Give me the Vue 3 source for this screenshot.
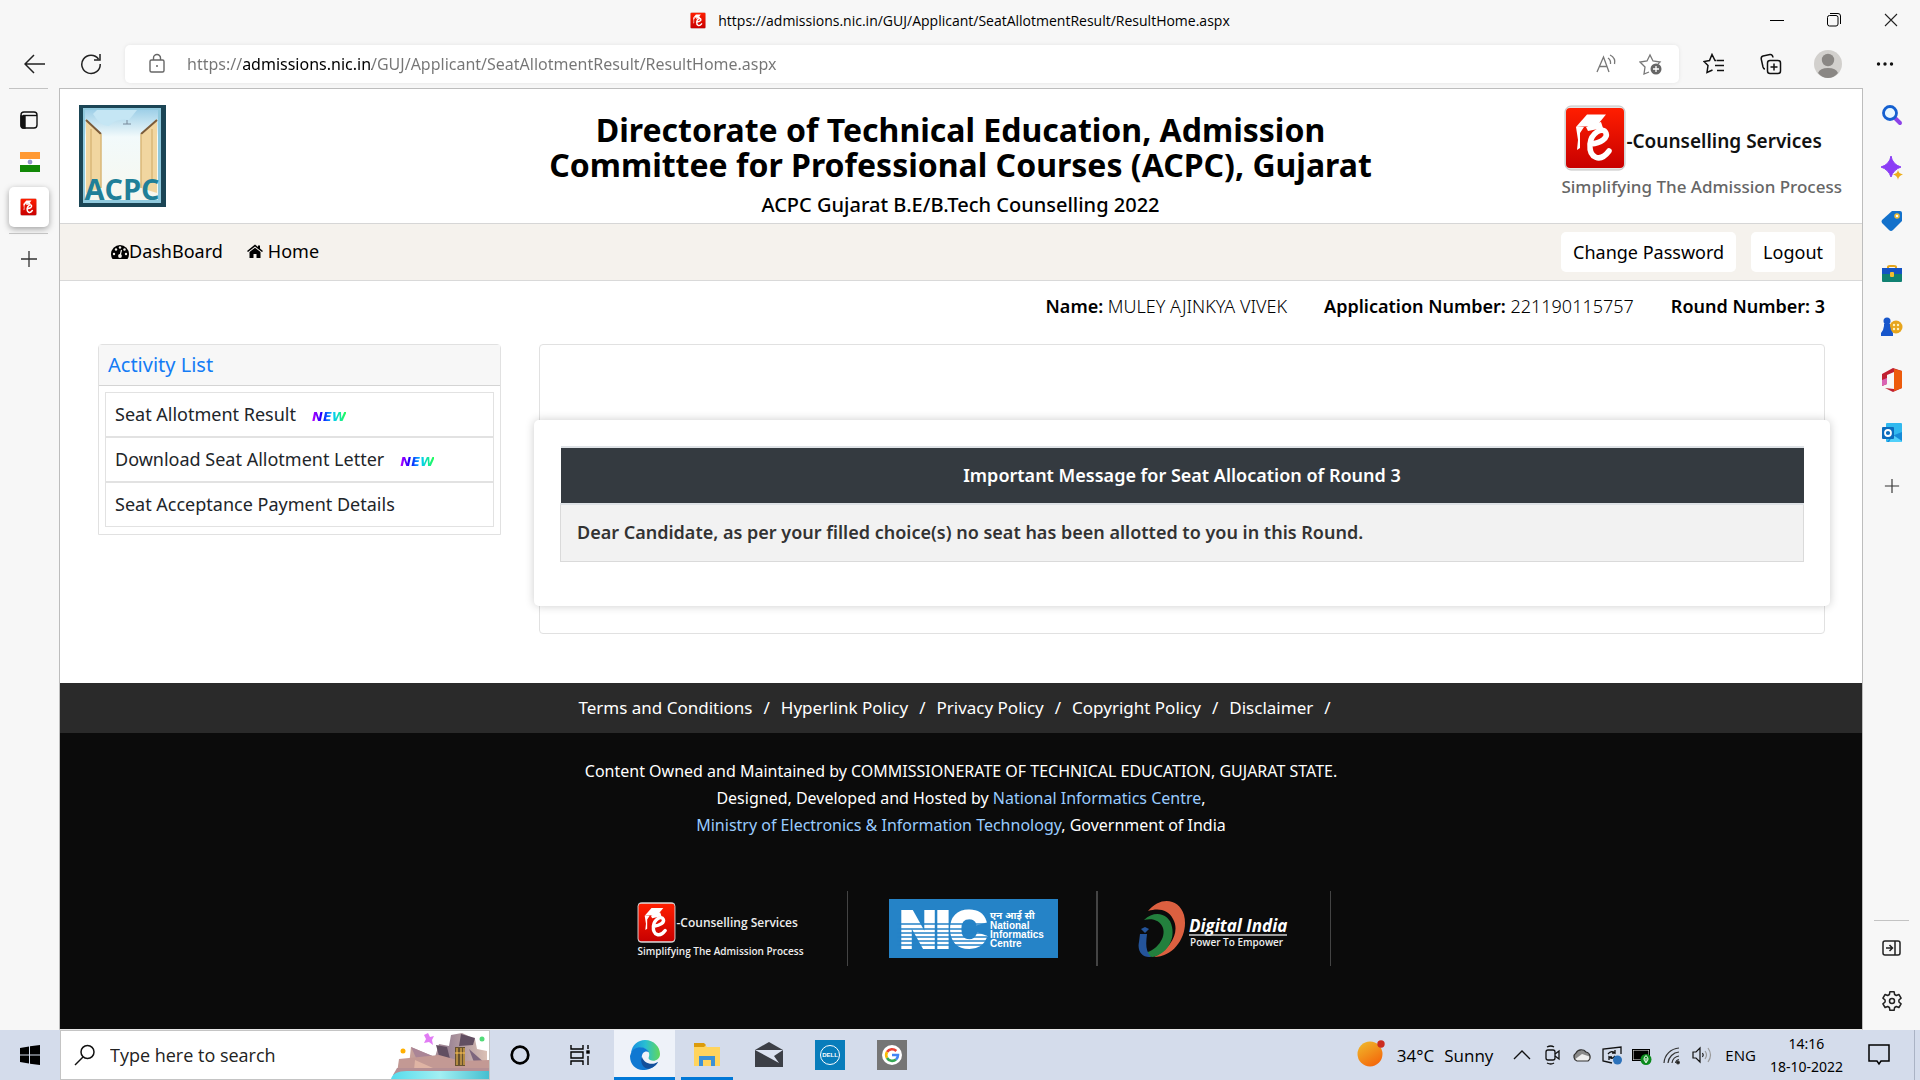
<script setup>
import { ref } from 'vue'

const address = ref('https://admissions.nic.in/GUJ/Applicant/SeatAllotmentResult/ResultHome.aspx')
const query = ref('')

const activities = [
  { label: 'Seat Allotment Result', fresh: true },
  { label: 'Download Seat Allotment Letter', fresh: true },
  { label: 'Seat Acceptance Payment Details', fresh: false }
]

const policies = ['Terms and Conditions', 'Hyperlink Policy', 'Privacy Policy', 'Copyright Policy', 'Disclaimer']
</script>

<template>
  <div class="screen">
    <svg class="defs" width="0" height="0" aria-hidden="true">
      <defs>
        <linearGradient id="red" x1="0" y1="0" x2="0" y2="1"><stop offset="0" stop-color="#ff1e00" /><stop offset="1" stop-color="#c80000" /></linearGradient>
        <symbol id="e-logo" viewBox="0 0 62 66">
          <rect x="1" y="1" width="60" height="64" rx="6" fill="#e6e6e6" stroke="#c4c4c4" />
          <rect x="2" y="3" width="58" height="60" rx="4" fill="url(#red)" />
          <path d="M23 9.500H42L35 18L28 21L12 22Z" fill="#fff" />
          <path d="M12 22L14 35L13 45L16 43V28L20 22Z" fill="#fff" />
          <path d="M22 22Q30 18 37 17L39 23L24 26Z" fill="#fff" />
          <path d="M27 39C37 38 44 33 42 28C39 21 27 28 26 39C25 53 36 58 45 46" fill="none" stroke="#fff" stroke-width="5.500" stroke-linecap="round" />
        </symbol>
        <symbol id="plus" viewBox="0 0 18 18"><path d="M9 1V17M1 9H17" fill="none" stroke="#333" stroke-width="1.300" /></symbol>
      </defs>
    </svg>

    <header class="titlebar">
      <span></span>
      <div class="title">
        <svg width="16" height="17"><use href="#e-logo" /></svg>
        <span>https://admissions.nic.in/GUJ/Applicant/SeatAllotmentResult/ResultHome.aspx</span>
      </div>
      <div class="window-buttons">
        <button aria-label="Minimise"><svg width="14" height="14"><path d="M0 7.500H14" stroke="#000" /></svg></button>
        <button aria-label="Restore"><svg width="14" height="14" fill="none" stroke="#000"><rect x=".5" y="2.500" width="10.500" height="10.500" rx="2" /><path d="M3 .5H11Q13.500 .5 13.500 3V11" /></svg></button>
        <button aria-label="Close"><svg width="14" height="14"><path d="M1 1L13 13M13 1L1 13" stroke="#222" stroke-width="1.100" /></svg></button>
      </div>
    </header>

    <div class="toolbar">
      <button class="tool back" aria-label="Back"><svg width="22" height="20" fill="none" stroke="#222" stroke-width="1.500"><path d="M21 10H2M10 1L1 10L10 19" /></svg></button>
      <button class="tool reload" aria-label="Refresh"><svg width="22" height="22" fill="none" stroke="#222" stroke-width="1.500"><path d="M18.500 6A9.200 9.200 0 1 0 20.200 11M20 1V7H14" /></svg></button>
      <div class="address">
        <svg width="18" height="22" fill="none" stroke="#666" stroke-width="1.400"><rect x="2" y="7" width="14" height="12" rx="1.500" /><path d="M5.500 7V5A3.500 3.500 0 0 1 12.500 5V7" /><circle cx="9" cy="13" r="1" fill="#666" stroke="none" /></svg>
        <input v-model="address" aria-label="Address" />
        <button class="tool" aria-label="Read aloud"><svg width="22" height="20" fill="none" stroke="#777" stroke-width="1.300"><path d="M2 18L8.500 3L14 18M4.500 12.500H12M13 4Q16 6 15.500 10M15 1Q21 4 19.500 10" /></svg></button>
        <button class="tool star" aria-label="Add to favourites"><svg width="24" height="22" fill="none" stroke="#777" stroke-width="1.300"><path d="M10 19L5 21L6 14L1 9L8 8L11 2L14 8L21 9L19 11" /><circle cx="17" cy="16" r="5.500" fill="#666" stroke="none" /><path d="M17 13V19M14 16H20" stroke="#fff" /></svg></button>
      </div>
      <button class="tool" aria-label="Favourites"><svg width="22" height="22" fill="none" stroke="#111" stroke-width="1.500"><path d="M13.500 7.500H12L9 1.500L6.500 7.500L1 8.500L5 12.500L4 19.500L9.500 17M14 7.500H21M12 12.500H21M14 17.500H21" /></svg></button>
      <button class="tool" aria-label="Collections"><svg width="22" height="22" fill="none" stroke="#111" stroke-width="1.500"><rect x="7.500" y="7.500" width="13" height="13" rx="2.500" /><path d="M14 10.500V17.500M10.500 14H17.500M5 16Q3.500 16 3 14L1.200 6Q1 3.500 3 3L10 1.500Q12.500 1.200 13 4.500" /></svg></button>
      <button class="tool" aria-label="Profile"><svg width="28" height="28"><circle cx="14" cy="14" r="14" fill="#d2d0cd" /><circle cx="14" cy="10" r="6.200" fill="#8a8784" /><path d="M4 23Q6 18 14 18Q22 18 24 23Q20 28 14 28Q8 28 4 23" fill="#8a8784" /></svg></button>
      <button class="tool" aria-label="More"><svg width="18" height="6" fill="#111"><circle cx="2.500" cy="3" r="1.700" /><circle cx="9" cy="3" r="1.700" /><circle cx="15.500" cy="3" r="1.700" /></svg></button>
    </div>

    <div class="browser">
      <nav class="tabs" aria-label="Tabs">
        <hr />
        <button class="tab" aria-label="Tab actions"><svg width="18" height="18" fill="none" stroke="#111" stroke-width="1.400"><rect x="1" y="1" width="16" height="16" rx="3" /><path d="M3 4.500H17" /><path d="M1 5H5V17H3Q1 17 1 14Z" fill="#111" /></svg></button>
        <button class="tab second" aria-label="India portal"><svg width="20" height="20"><rect width="20" height="20" fill="#fff" /><rect width="20" height="7" fill="#ff9933" /><rect y="13" width="20" height="7" fill="#128807" /><circle cx="10" cy="10" r="2" fill="#99c" stroke="#66b" stroke-width=".5" /></svg></button>
        <button class="tab active" aria-label="Counselling"><svg width="17" height="18"><use href="#e-logo" /></svg></button>
        <hr class="low" />
        <button class="tab" aria-label="New tab"><svg width="18" height="18"><use href="#plus" /></svg></button>
      </nav>

      <main class="site">
        <header class="masthead">
          <svg class="acpc" width="87" height="102" viewBox="0 0 87 102">
            <defs><linearGradient id="sky" x1="0" y1="0" x2="0" y2="1"><stop offset="0" stop-color="#9fd0e8" /><stop offset=".3" stop-color="#f2fafb" /><stop offset="1" stop-color="#f7f7ee" /></linearGradient></defs>
            <rect width="87" height="102" fill="#1b4555" />
            <rect x="4" y="3" width="78" height="95" fill="#90c9dd" />
            <rect x="6" y="5" width="73" height="90" fill="url(#sky)" />
            <path d="M14 9Q22 22 30 21Q37 13 50 15L58 5H18Z" fill="#c5e6f4" />
            <path d="M7 14L22 29V83L7 88Z" fill="#f1d6a0" />
            <path d="M78 14L62 29V83L78 88Z" fill="#f1d6a0" />
            <path d="M7 15L22 29M78 15L62 29" stroke="#7b5c3a" stroke-width="2" />
            <path d="M22 29V83M62 29V83M12 24V78M73 24V78" stroke="#d9b878" stroke-width="1.500" />
            <path d="M44 19H52M48 15V19" stroke="#789" />
            <text x="43" y="95" text-anchor="middle" font-family="Open Sans, sans-serif" font-weight="700" font-size="29" fill="#207f98">ACPC</text>
          </svg>
          <div class="heading">
            <h1>Directorate of Technical Education, Admission<br />Committee for Professional Courses (ACPC), Gujarat</h1>
            <p>ACPC Gujarat B.E/B.Tech Counselling 2022</p>
          </div>
          <div class="brand">
            <div class="brand-top"><svg width="62" height="66"><use href="#e-logo" /></svg><strong>-Counselling Services</strong></div>
            <span>Simplifying The Admission Process</span>
          </div>
        </header>

        <nav class="menu">
          <a href="#dashboard"><svg width="18" height="15" viewBox="0 0 18 15"><path d="M9 1A9 9 0 0 0 0 10Q0 13 1.500 15H16.500Q18 13 18 10A9 9 0 0 0 9 1" fill="#000" /><g fill="#f5f2ed"><circle cx="3" cy="10" r="1.200" /><circle cx="5" cy="5.500" r="1.200" /><circle cx="9" cy="3.500" r="1.200" /><circle cx="13.500" cy="5.500" r="1.200" /><circle cx="15" cy="10" r="1.200" /><circle cx="9" cy="12" r="1.900" /></g><path d="M9 12L10.500 6" stroke="#f5f2ed" stroke-width="1.200" /></svg>DashBoard</a>
          <a class="home" href="#home"><svg width="16" height="14" viewBox="0 0 16 14"><path d="M0 7L8 .5L11 3V1.500H13V4.500L16 7L15 8L8 2.500L1 8Z" /><path d="M2.500 8L8 3.700L13.500 8V14H9.500V10H6.500V14H2.500Z" /></svg>Home</a>
          <span class="spacer"></span>
          <button>Change Password</button>
          <button>Logout</button>
        </nav>

        <div class="applicant">
          <span><b>Name:</b> MULEY AJINKYA VIVEK</span>
          <span><b>Application Number:</b> 221190115757</span>
          <b>Round Number: 3</b>
        </div>

        <div class="columns">
          <section class="activity">
            <h2>Activity List</h2>
            <ul>
              <li v-for="item in activities" :key="item.label"><a href="#activity">{{ item.label }}</a><em v-if="item.fresh">NEW</em></li>
            </ul>
          </section>
          <section class="result">
            <div class="notice">
              <table>
                <thead><tr><th>Important Message for Seat Allocation of Round 3</th></tr></thead>
                <tbody><tr><td>Dear Candidate, as per your filled choice(s) no seat has been allotted to you in this Round.</td></tr></tbody>
              </table>
            </div>
          </section>
        </div>

        <footer class="foot">
          <div class="policies"><template v-for="p in policies" :key="p"><a href="#policy">{{ p }}</a><i>/</i></template></div>
          <div class="credits">
            <p>Content Owned and Maintained by COMMISSIONERATE OF TECHNICAL EDUCATION, GUJARAT STATE.</p>
            <p>Designed, Developed and Hosted by <a href="#nic">National Informatics Centre</a>,</p>
            <p><a href="#meity">Ministry of Electronics &amp; Information Technology</a>, Government of India</p>
          </div>
          <div class="partners">
            <div class="partner first">
              <div class="mini">
                <div class="brand-top"><svg width="39" height="41"><use href="#e-logo" /></svg><strong>-Counselling Services</strong></div>
                <span>Simplifying The Admission Process</span>
              </div>
            </div>
            <div class="partner second">
              <svg width="169" height="59" viewBox="0 0 169 59">
                <rect width="169" height="59" fill="#2583c7" />
                <text x="11" y="48" font-family="Liberation Sans, sans-serif" font-weight="700" font-size="50" fill="#fff" stroke="#fff" stroke-width="4">NIC</text>
                <path d="M8 25H98M8 30H98M8 34H98M8 38H98M8 42H98M8 46H98" stroke="#2583c7" stroke-width="1.300" />
                <g fill="#fff" font-family="Liberation Sans, Noto Sans Devanagari, sans-serif" font-weight="700" font-size="10">
                  <text x="101" y="20">एन आई सी</text><text x="101" y="30">National</text><text x="101" y="39">Informatics</text><text x="101" y="48">Centre</text>
                </g>
              </svg>
            </div>
            <div class="partner third">
              <svg width="152" height="58" viewBox="0 0 152 58">
                <path d="M10 11C22 -4 41 -2 46 15C51 34 37 57 16 57C34 48 42 31 35 19C30 9 20 8 10 11Z" fill="#dc6040" />
                <path d="M6 20C17 9 32 14 34 27C37 41 28 54 15 57C8 57 5 54 7 53C19 50 28 38 25 28C22 20 14 18 6 20Z" fill="#23803d" />
                <path d="M2 34H9C8 43 7 50 13 57C4 58 -1 51 1 42Z" fill="#24549a" /><path d="M3 29L7 27L11 29L7 33Z" fill="#24549a" />
                <text x="51" y="32" font-family="Open Sans, sans-serif" font-weight="700" font-style="italic" font-size="17" fill="#fff">Digital India</text>
                <path d="M51 35H149" stroke="#ccc" stroke-width="1.500" />
                <text x="52" y="46" font-family="Open Sans, sans-serif" font-weight="600" font-size="10" fill="#eee">Power To Empower</text>
              </svg>
            </div>
          </div>
        </footer>
      </main>

      <aside class="sidebar">
        <button aria-label="Search"><svg width="22" height="22"><path d="M14 14L19 19" stroke="#8d43e8" stroke-width="4" stroke-linecap="round" /><circle cx="9" cy="9" r="6.500" fill="#e9f8ff" stroke="#1560d0" stroke-width="2.800" /></svg></button>
        <button aria-label="Discover"><svg width="24" height="24"><path d="M11 0Q12.500 8.500 21 11Q13.500 13.500 11 21Q8.500 13.500 1 11Q9.500 8.500 11 0" fill="#8b3df5" stroke="#8b3df5" stroke-linejoin="round" /><path d="M18 14Q18.500 17.500 23 18.500Q18.500 19.500 18 24Q17.500 19.500 13 18.500Q17.500 17.500 18 14" fill="#edae1c" /></svg></button>
        <button aria-label="Shopping"><svg width="22" height="22"><path d="M11 1H19Q21 1 21 3V11L12 20Q10 22 8 20L1 13Q0 11 1 10Z" fill="#1371cb" /><circle cx="16" cy="6" r="2" fill="#fff" stroke="#f0bd32" stroke-width="1.500" /></svg></button>
        <button aria-label="Tools"><svg width="22" height="20"><path d="M7 5V3Q7 2 9 2H13Q15 2 15 3V5" fill="none" stroke="#e4a51d" stroke-width="2" /><path d="M1 8H21V17Q21 18 20 18H2Q1 18 1 17Z" fill="#108172" /><path d="M1 4H21V10H1Z" fill="#1453c4" /><rect x="9" y="8" width="4" height="5" rx="1" fill="#f2bd30" /></svg></button>
        <button aria-label="Games"><svg width="24" height="22"><circle cx="16" cy="11" r="6.500" fill="#e7a51c" /><g fill="#fff2bd"><circle cx="14" cy="9" r="1.200" /><circle cx="18" cy="9" r="1.200" /><circle cx="14" cy="13" r="1.200" /><circle cx="18" cy="13" r="1.200" /></g><circle cx="7" cy="5" r="3.500" fill="#1756cb" /><path d="M4 8H10V10L11 14L13 17V20H1V17L3 14L4 10Z" fill="#1756cb" /></svg></button>
        <button aria-label="Office"><svg width="22" height="24"><path d="M1 6L12 0L21 3V20L12 24L4 20L13 21V4L6 7V16L1 18Z" fill="#c02032" /><path d="M13 1L21 3V20L13 23Z" fill="#ed5b0c" /><path d="M1 12L6 10V16L1 18Z" fill="#da63b4" /></svg></button>
        <button aria-label="Outlook"><svg width="22" height="22"><rect x="5" y="1" width="16" height="19" rx="1" fill="#31b9ef" /><path d="M11 14L21 10V20H6Z" fill="#158bd8" /><path d="M12 13L21 19V20H8Z" fill="#50d0fa" /><rect x="1" y="5" width="12" height="12" rx="1" fill="#0b6cbd" /><circle cx="7" cy="11" r="3" fill="none" stroke="#fff" stroke-width="1.800" /></svg></button>
        <button aria-label="Add"><svg width="16" height="16"><use href="#plus" /></svg></button>
        <span class="spacer"></span>
        <hr />
        <button aria-label="Hide sidebar"><svg width="20" height="18" fill="none" stroke="#222" stroke-width="1.500"><rect x="1" y="2" width="17" height="14" rx="2" /><path d="M13 2V16M4 9H10M7.500 6L10.500 9L7.500 12" /></svg></button>
        <button aria-label="Settings"><svg width="22" height="22" viewBox="0 0 22 22" fill="none" stroke="#222" stroke-width="1.500" stroke-linejoin="round"><path d="M8.400 4.500L8.900 1.700H13.100L13.600 4.500L15.300 5.500L17.900 4.500L20.100 8.200L17.900 10V12L20.100 13.800L17.900 17.500L15.300 16.500L13.600 17.500L13.100 20.300H8.900L8.400 17.500L6.700 16.500L4.100 17.500L1.900 13.800L4.100 12V10L1.900 8.200L4.100 4.500L6.700 5.500Z" /><circle cx="11" cy="11" r="2.500" /></svg></button>
      </aside>
    </div>

    <footer class="taskbar">
      <button class="start" aria-label="Start"><svg width="20" height="20" fill="#000"><path d="M0 3L9 1.500V9.500H0ZM10 1.300L20 0V9.500H10ZM0 10.500H9V18.500L0 17ZM10 10.500H20V20L10 18.700Z" /></svg></button>
      <div class="search">
        <svg width="22" height="22" fill="none" stroke="#111" stroke-width="1.500"><circle cx="13.500" cy="8" r="6.500" /><path d="M9 13L1 21" /></svg>
        <input v-model="query" type="search" placeholder="Type here to search" aria-label="Type here to search" />
        <svg class="scene" width="98" height="48" viewBox="0 0 98 48">
          <defs>
            <linearGradient id="stone" x1="0" y1="0" x2="1" y2="0"><stop offset="0" stop-color="#caa39b" /><stop offset=".5" stop-color="#9b8494" /><stop offset="1" stop-color="#dbc1b5" /></linearGradient>
            <linearGradient id="water" x1="0" y1="0" x2="1" y2="0"><stop offset="0" stop-color="#55dced" /><stop offset=".5" stop-color="#a2eff2" /><stop offset="1" stop-color="#45bfd0" /></linearGradient>
          </defs>
          <path d="M20 16L44 26L48 13L58 15L60 4L71 2L84 8L86 18L96 20V34H18Z" fill="url(#stone)" />
          <path d="M45 14L56 16L60 32H50ZM70 3L84 7L82 14L68 15Z" fill="#624f62" />
          <path d="M20 16L46 27L28 33Z" fill="#aa8596" /><path d="M78 18L96 34H84Z" fill="#7d667d" />
          <path d="M8 28L48 24L70 30L98 29V42H6Z" fill="#c39994" /><path d="M24 29L42 37L23 39Z" fill="#dfb4a4" />
          <rect x="64" y="16" width="10" height="19" fill="#67512f" /><path d="M66 17V34M70 17V34M73 17V34M64 22H74" stroke="#ffc454" stroke-width="1" />
          <path d="M6 37H98V44H2Z" fill="#b58f94" /><path d="M0 48Q2 40 16 40H98V48Z" fill="url(#water)" />
          <path d="M37 2L39 6L43 5L41 9L42 14L38 11L33 12L35 8L33 4Z" fill="#e17cf4" /><circle cx="12" cy="20" r="2.500" fill="#ffb000" /><circle cx="91" cy="8" r="2.500" fill="#52db78" />
        </svg>
      </div>
      <button class="narrow" aria-label="Cortana"><svg width="20" height="20"><circle cx="10" cy="10" r="8.300" fill="none" stroke="#000" stroke-width="2.700" /></svg></button>
      <button class="narrow" aria-label="Task view"><svg width="20" height="20" fill="none" stroke="#000" stroke-width="1.400"><path d="M1 0V4H13V0M1 20V16H13V20M1 7H13V13H1ZM18 0V4M18 11V20" /><rect x="17" y="6" width="2" height="2" fill="#000" /></svg></button>
      <button class="open current" aria-label="Edge"><svg width="30" height="30" viewBox="0 0 30 30">
        <defs><linearGradient id="edge-top"><stop stop-color="#168de2" /><stop offset=".5" stop-color="#29bed2" /><stop offset="1" stop-color="#63d85a" /></linearGradient></defs>
        <path d="M1 13C2 5 8 0 15 0C24 0 30 7 30 14C30 20 24 22 20 20C17 18 20 17 19 13C16 6 6 6 1 13Z" fill="url(#edge-top)" />
        <path d="M1 13C4 6 15 5 19 12C14 10 11 14 12 19C14 26 22 27 28 22C21 34 0 33 0 16Z" fill="#0f78d2" /><path d="M12 17C9 23 15 31 21 28C24 27 27 24 28 22C21 26 14 23 12 17Z" fill="#134f9b" />
      </svg></button>
      <button class="open" aria-label="File Explorer"><svg width="28" height="26"><path d="M1 2H11L14 5H27V24H1Z" fill="#ffd45d" /><path d="M1 1H11L13 3L11 5H1Z" fill="#dc9b0b" /><path d="M6 24V14H22V24H18V18H10V24Z" fill="#3c91d6" /></svg></button>
      <button class="narrow" aria-label="Mail"><svg width="30" height="26"><path d="M1 8L15 0L29 8V25H1Z" fill="#3c3f46" /><path d="M1 8H29L20 14L25 21L14 15Z" fill="#dce3f1" /></svg></button>
      <button aria-label="Dell"><svg width="30" height="30"><rect width="30" height="30" fill="#087dbb" /><circle cx="15" cy="15" r="9.500" fill="none" stroke="#fff" /><text x="15" y="17" text-anchor="middle" font-family="Liberation Sans, sans-serif" font-size="6" font-weight="700" fill="#fff">DELL</text></svg></button>
      <button aria-label="Google"><svg width="30" height="30" fill="none" stroke-width="2.600"><rect width="30" height="30" fill="#757575" stroke="none" /><circle cx="15" cy="15" r="10" fill="#fff" stroke="none" /><path d="M19.300 11A6 6 0 0 0 10 12" stroke="#ea4335" /><path d="M10 12A6 6 0 0 0 10 18" stroke="#fbbc05" /><path d="M10 18A6 6 0 0 0 19 19.500" stroke="#34a853" /><path d="M19 19.500A6 6 0 0 0 21 15H15" stroke="#4285f4" /></svg></button>
      <span class="spacer"></span>
      <div class="weather"><svg width="32" height="32"><defs><linearGradient id="sun" x2=".6" y2="1"><stop stop-color="#efbd2d" /><stop offset="1" stop-color="#f46a0c" /></linearGradient></defs><circle cx="15" cy="15" r="12.500" fill="url(#sun)" /><circle cx="26" cy="5" r="3.700" fill="#cb2c20" /></svg><span>34°C</span><span>Sunny</span></div>
      <div class="tray">
        <svg viewBox="0 0 20 20" fill="none" stroke="#111" stroke-width="1.300"><path d="M2 14L10 6L18 14" /></svg>
        <svg viewBox="0 0 20 20" fill="none" stroke="#111" stroke-width="1.300"><rect x="4" y="5" width="9" height="10" rx="2" /><path d="M13 9L17 6V14L13 11M5 2Q9 0 12 2M5 18Q9 20 12 18" /></svg>
        <svg viewBox="0 0 20 20"><path d="M5 16A4.500 4.500 0 0 1 4 8A6 6 0 0 1 14 7A5 5 0 0 1 16 16Z" fill="#8a8a8a" /><path d="M2 15L10 9L19 12Q19 16 16 16H5Z" fill="#eee" /><path d="M5 16A4.500 4.500 0 0 1 4 8A6 6 0 0 1 14 7A5 5 0 0 1 16 16Z" fill="none" stroke="#333" stroke-width="1.200" /></svg>
        <svg viewBox="0 0 20 20" fill="none" stroke="#111" stroke-width="1.300"><path d="M10 18L1 16V4L19 2V9M6 9Q9 5 13 8V5M13 8H10M13 11Q10 15 7 12V15M7 12H10" /><circle cx="15.500" cy="15" r="4.500" fill="#2c72bb" stroke="none" /></svg>
        <svg viewBox="0 0 20 20"><rect x="1" y="5" width="16" height="10" fill="#000" stroke="#eee" stroke-width="1" /><rect x=".5" y="4.500" width="17" height="11" fill="none" stroke="#000" /><circle cx="14" cy="14.500" r="5.500" fill="#0a8a1c" /><path d="M14 10.500Q18 14 14 17.500Q10 14 14 10.500M14 13V18" fill="none" stroke="#fff" /></svg>
        <svg viewBox="0 0 20 20" fill="none" stroke="#333" stroke-width="1.200"><path d="M2 18A16 16 0 0 1 17 3M6 18A12 12 0 0 1 17 7M10 18A8 8 0 0 1 17 11M13.500 18Q14 15 17 14.500" /><circle cx="16" cy="17.500" r="1.300" fill="#111" /></svg>
        <svg viewBox="0 0 20 20" fill="none" stroke="#111" stroke-width="1.200"><path d="M1 7H4L8 3V17L4 13H1Z" /><path d="M10.500 8Q12 10 10.500 12" /><path d="M13 6Q16 10 13 14M16 3Q21 10 16 17" stroke="#999" /></svg>
      </div>
      <span class="lang">ENG</span>
      <div class="clock"><time>14:16</time><time>18-10-2022</time></div>
      <button class="notes" aria-label="Notifications"><svg width="22" height="22" fill="none" stroke="#000" stroke-width="1.500"><path d="M1 1H21V17H13L11 20L9 17H1Z" /></svg></button>
    </footer>
  </div>
</template>

<style>
body { margin: 0; }
</style>

<style scoped>
* { box-sizing: border-box; }
.screen { display: flex; flex-direction: column; min-height: 100vh; background: #f7f7f7; font-family: "Open Sans", "Noto Sans", sans-serif; color: #000; }
.defs { position: absolute; }
button { padding: 0; border: 0; background: none; font: inherit; color: inherit; display: flex; align-items: center; justify-content: center; }
a { color: inherit; text-decoration: none; }
h1, h2, p, ul { margin: 0; padding: 0; }
svg { display: block; flex: none; }
hr { border: 0; border-top: 1px solid #c3c3c3; margin: 0; width: 39px; }
.spacer { flex: 1; }

.titlebar { display: grid; grid-template-columns: 1fr auto 1fr; height: 40px; align-items: center; font-size: 14px; }
.title { display: flex; align-items: center; gap: 12px; }
.window-buttons { display: flex; justify-content: flex-end; padding-right: 1px; }
.window-buttons button { width: 57px; height: 38px; }

.toolbar { display: flex; align-items: center; height: 48px; padding: 0 7px 0 6px; }
.tool { width: 57px; height: 40px; }
.reload { width: 55px; }
.address { flex: 1; display: flex; align-items: center; height: 38px; margin: 0 6px 0 7px; padding-left: 23px; background: #fff; border-radius: 5px; box-shadow: 0 0 4px rgba(0, 0, 0, .08); }
.address input { flex: 1; min-width: 0; margin-left: 21px; padding: 0; border: 0; outline: 0; font: 400 16px "Noto Sans", sans-serif; color: transparent; background: linear-gradient(90deg, #757575 56px, #000 56px, #000 185px, #757575 185px); background-clip: text; -webkit-background-clip: text; }
.address .tool { width: 45px; }
.address .tool.star { margin-right: 6px; }

.browser { flex: 1; display: grid; grid-template-columns: 59px minmax(0, 1fr) 57px; }
.tabs { display: flex; flex-direction: column; align-items: center; padding-right: 2px; }
.tab { width: 40px; height: 40px; margin-top: 11px; }
.tab.second { margin-top: 2px; }
.tab.active { margin-top: 5px; background: #fff; border-radius: 5px; box-shadow: 0 2px 6px rgba(0, 0, 0, .35); }
.low { margin-top: 6px; }
.low + .tab { margin-top: 5px; }

.site { display: flex; flex-direction: column; background: #fff; border: 1px solid #bdbdbd; border-bottom-color: #e8e8e8; font-family: "Noto Sans", "Open Sans", sans-serif; font-size: 18px; }
.masthead { display: grid; grid-template-columns: 1fr auto 1fr; height: 135px; padding: 16px 20px 0 19px; border-bottom: 1px solid #d6d6d6; }
.heading { text-align: center; }
h1 { margin-top: 7px; font-size: 32px; line-height: 35px; font-weight: 700; }
.heading p { margin-top: 9px; font-size: 20px; line-height: 28px; font-weight: 500; }
.brand { justify-self: end; display: flex; flex-direction: column; color: #111; }
.brand-top { display: flex; align-items: center; }
.brand > .brand-top { padding-left: 3px; }
.brand strong { margin-top: 6px; font: 600 19px "Noto Sans", sans-serif; }
.brand > span { margin-top: 4px; font: 500 17px/24px "Noto Sans", sans-serif; color: #666; }

.menu { display: flex; align-items: center; height: 57px; padding: 0 27px 0 51px; background: #f5f2ed; border-bottom: 1px solid #d9d9d9; }
.menu a { display: flex; align-items: center; padding-bottom: 2px; }
.menu .home { margin-left: 24px; gap: 5px; }
.menu button { height: 40px; padding: 0 12px; background: #fff; border-radius: 5px; }
.menu button + button { margin-left: 15px; }

.applicant { display: flex; justify-content: flex-end; gap: 37px; padding: 13px 37px 0; line-height: 24px; font-weight: 300; }
.applicant b { font-weight: 600; }

.columns { display: grid; grid-template-columns: minmax(0, 403fr) minmax(0, 1286fr); gap: 38px; align-items: start; padding: 26px 37px 49px 38px; }
.activity { border: 1px solid #e1e1e1; border-radius: 4px 4px 0 0; padding-bottom: 7px; }
h2 { padding: 0 9px; height: 41px; line-height: 40px; background: #f7f7f7; border-bottom: 1px solid #d4d4d4; font-size: 20px; font-weight: 400; color: #147cf5; }
ul { margin: 6px 6px 0; list-style: none; }
li { display: flex; align-items: center; height: 45px; padding: 0 9px 2px; border: 1px solid #e2e2e2; color: #212529; }
em { margin: 6px 0 0 16px; font: italic 700 13px/12px "DejaVu Sans", sans-serif; background: linear-gradient(90deg, #c400ff, #1200ff 30%, #00c8ff 60%, #22ff55); background-clip: text; -webkit-background-clip: text; color: transparent; }
.result { padding: 75px 0 27px; border: 1px solid #e1e1e1; border-radius: 4px; }
.notice { margin: 0 -6px; padding: 26px 26px 44px; background: #fff; border-radius: 5px; box-shadow: 0 0 10px rgba(0, 0, 0, .2); }
table { width: 100%; border-collapse: collapse; }
th { height: 57px; padding: 0 0 2px; background: #343a40; color: #fff; border-top: 2px solid #dee2e6; border-bottom: 2px solid #dee2e6; font-weight: 600; }
td { height: 57px; padding: 0 16px 2px; background: #f2f2f2; border: 1px solid #dadada; color: #333; font-weight: 600; }

.foot { flex: 1; background: #0b0b0b; color: #fff; }
.policies { display: flex; justify-content: center; align-items: center; height: 50px; padding-right: 2px; background: #2a2a2a; font-size: 17px; }
.policies i { margin: 0 11px; font-style: normal; }
.credits { padding-top: 25px; text-align: center; font-size: 16px; line-height: 27px; }
.credits a { color: #99ccff; }
.partners { display: flex; justify-content: center; align-items: center; margin-top: 52px; padding-left: 46px; }
.partner { display: flex; align-items: center; height: 75px; border-right: 1px solid #444; }
.first { padding-right: 43px; }
.second { padding: 0 38px 0 41px; border-right-width: 2px; }
.third { padding: 2px 40px 0; }
.mini { display: flex; flex-direction: column; padding-top: 4px; color: #eee; }
.mini strong { font: 600 12px "Open Sans", sans-serif; }
.mini > span { font: 600 10px/16px "Open Sans", sans-serif; }

.sidebar { display: flex; flex-direction: column; align-items: center; padding-bottom: 3px; }
.sidebar button { width: 100%; height: 53px; }
.sidebar hr { width: 35px; }

.taskbar { display: flex; align-items: center; height: 50px; background: #d4dceb; }
.taskbar > button { width: 62px; height: 50px; }
.taskbar > .start, .taskbar > .narrow { width: 60px; }
.search { display: flex; align-items: center; flex: 0 1 430px; height: 50px; padding-left: 13px; background: #fff; border: 1px solid #c4c4c4; }
.search input { flex: 1; min-width: 0; margin-left: 14px; padding: 0; border: 0; outline: 0; font: 400 18px "Open Sans", sans-serif; }
.search input::placeholder { color: #222; opacity: 1; }
.taskbar > .open { border-bottom: 3px solid #0078d7; padding-top: 3px; width: 52px; margin: 0 6px; }
.taskbar > .current { width: 61px; margin: 0 0 0 4px; background: #eef2f9; }
.weather { display: flex; align-items: center; gap: 10px; font-size: 17px; }
.tray { display: flex; gap: 10px; margin: 0 13px 0 19px; }
.tray svg { width: 20px; height: 20px; }
.lang { font-size: 15px; }
.clock { display: flex; flex-direction: column; align-items: center; margin-left: 14px; font: 400 14px/23px "Noto Sans", sans-serif; }
.taskbar > .notes { width: 72px; margin-right: 5px; border-right: 1px solid #aab3c4; }
</style>
